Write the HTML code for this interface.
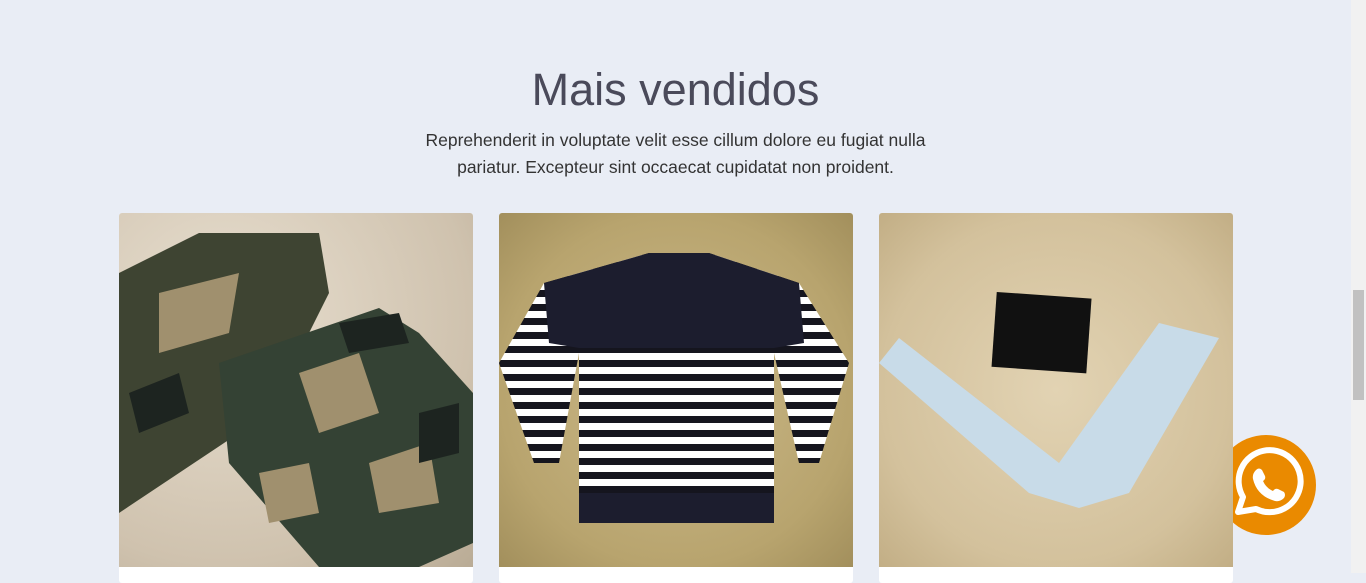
<!DOCTYPE html>
<html><head><meta charset="utf-8"><style>
html,body{margin:0;padding:0}
body{width:1366px;height:573px;overflow:hidden;background:#e9edf5;position:relative;font-family:"Liberation Sans",sans-serif}
h1{position:absolute;left:0;width:1351px;top:60px;margin:0;text-align:center;font-weight:normal;font-size:45px;color:#4a4a5a;letter-spacing:0;line-height:60px}
p{position:absolute;left:0;width:1351px;top:127px;margin:0;text-align:center;font-size:17.5px;line-height:27px;color:#333}
.card{position:absolute;top:213px;width:354px;height:370px;background:#fff;border-radius:3px;overflow:hidden;z-index:2}
.img{position:absolute;left:0;top:0;width:354px;height:354px;overflow:hidden}
.sb{position:absolute;left:1351px;top:0;width:15px;height:573px;background:#f1f1f1}
.th{position:absolute;left:1353px;top:290px;width:11px;height:110px;background:#c1c1c1}
.wa{position:absolute;left:1216px;top:435px;width:100px;height:100px;border-radius:50%;background:#ea8a00;z-index:1}
</style></head><body>
<h1>Mais vendidos</h1>
<p>Reprehenderit in voluptate velit esse cillum dolore eu fugiat nulla<br>pariatur. Excepteur sint occaecat cupidatat non proident.</p>

<div class="card" style="left:119px"><div class="img" style="background:radial-gradient(ellipse at 30% 30%,#e8dfd0,#cfc2ae 70%,#b9ab95)">
<svg width="354" height="354"><path d="M0 60 L80 20 L200 20 L210 80 L150 200 L60 260 L0 300Z" fill="#3e4432"/><path d="M100 150 L260 95 L300 120 L354 180 L354 330 L300 354 L200 354 L110 250Z" fill="#344234"/><path d="M40 80 L120 60 L110 120 L40 140Z M180 160 L240 140 L260 200 L200 220Z M250 250 L310 230 L320 290 L260 300Z M140 260 L190 250 L200 300 L150 310Z" fill="#a0906e"/><path d="M10 180 L60 160 L70 200 L20 220Z M220 110 L280 100 L290 130 L230 140Z M300 200 L340 190 L340 240 L300 250Z" fill="#1d2420"/></svg></div></div>

<div class="card" style="left:499px"><div class="img" style="background:radial-gradient(ellipse at 50% 50%,#cbb98a,#b8a46e 70%,#a28f5c)">
<svg width="354" height="354"><defs><pattern id="st" width="10" height="14" patternUnits="userSpaceOnUse"><rect width="10" height="7" fill="#fff"/><rect y="7" width="10" height="7" fill="#15151e"/></pattern></defs>
<path d="M45 70 L150 40 L210 40 L300 70 L350 150 L320 250 L300 250 L275 140 L275 300 L80 300 L80 140 L60 250 L35 250 L0 150Z" fill="url(#st)"/>
<path d="M45 70 L150 40 L210 40 L300 70 L305 130 L275 135 L80 135 L50 130Z" fill="#1c1d2e"/>
<rect x="80" y="280" width="195" height="30" fill="#1c1d2e"/></svg></div></div>

<div class="card" style="left:879px"><div class="img" style="background:radial-gradient(ellipse at 50% 50%,#e2d3b3,#d3c19c 70%,#c2ae85)">
<svg width="354" height="354"><rect x="115" y="82" width="95" height="75" fill="#111" transform="rotate(4 160 120)"/><path d="M0 150 L20 125 L180 250 L280 110 L340 125 L250 280 L200 295 L150 280Z" fill="#c8dbe8"/></svg></div></div>

<div class="wa"><svg width="100" height="100" viewBox="0 0 100 100"><path d="M22 77 L27 62 A31 31 0 1 1 40 74 Z" fill="none" stroke="#fff" stroke-width="6" stroke-linejoin="round"/><path d="M40 35 q3 -3 6 0 l3 6 q1 3 -2 5 q3 7 10 10 q2 -3 5 -2 l6 3 q2 3 0 6 q-4 4 -9 3 q-18 -5 -22 -22 q-1 -5 3 -9z" fill="#fff"/></svg></div>
<div class="sb"></div><div class="th"></div>
</body></html>
